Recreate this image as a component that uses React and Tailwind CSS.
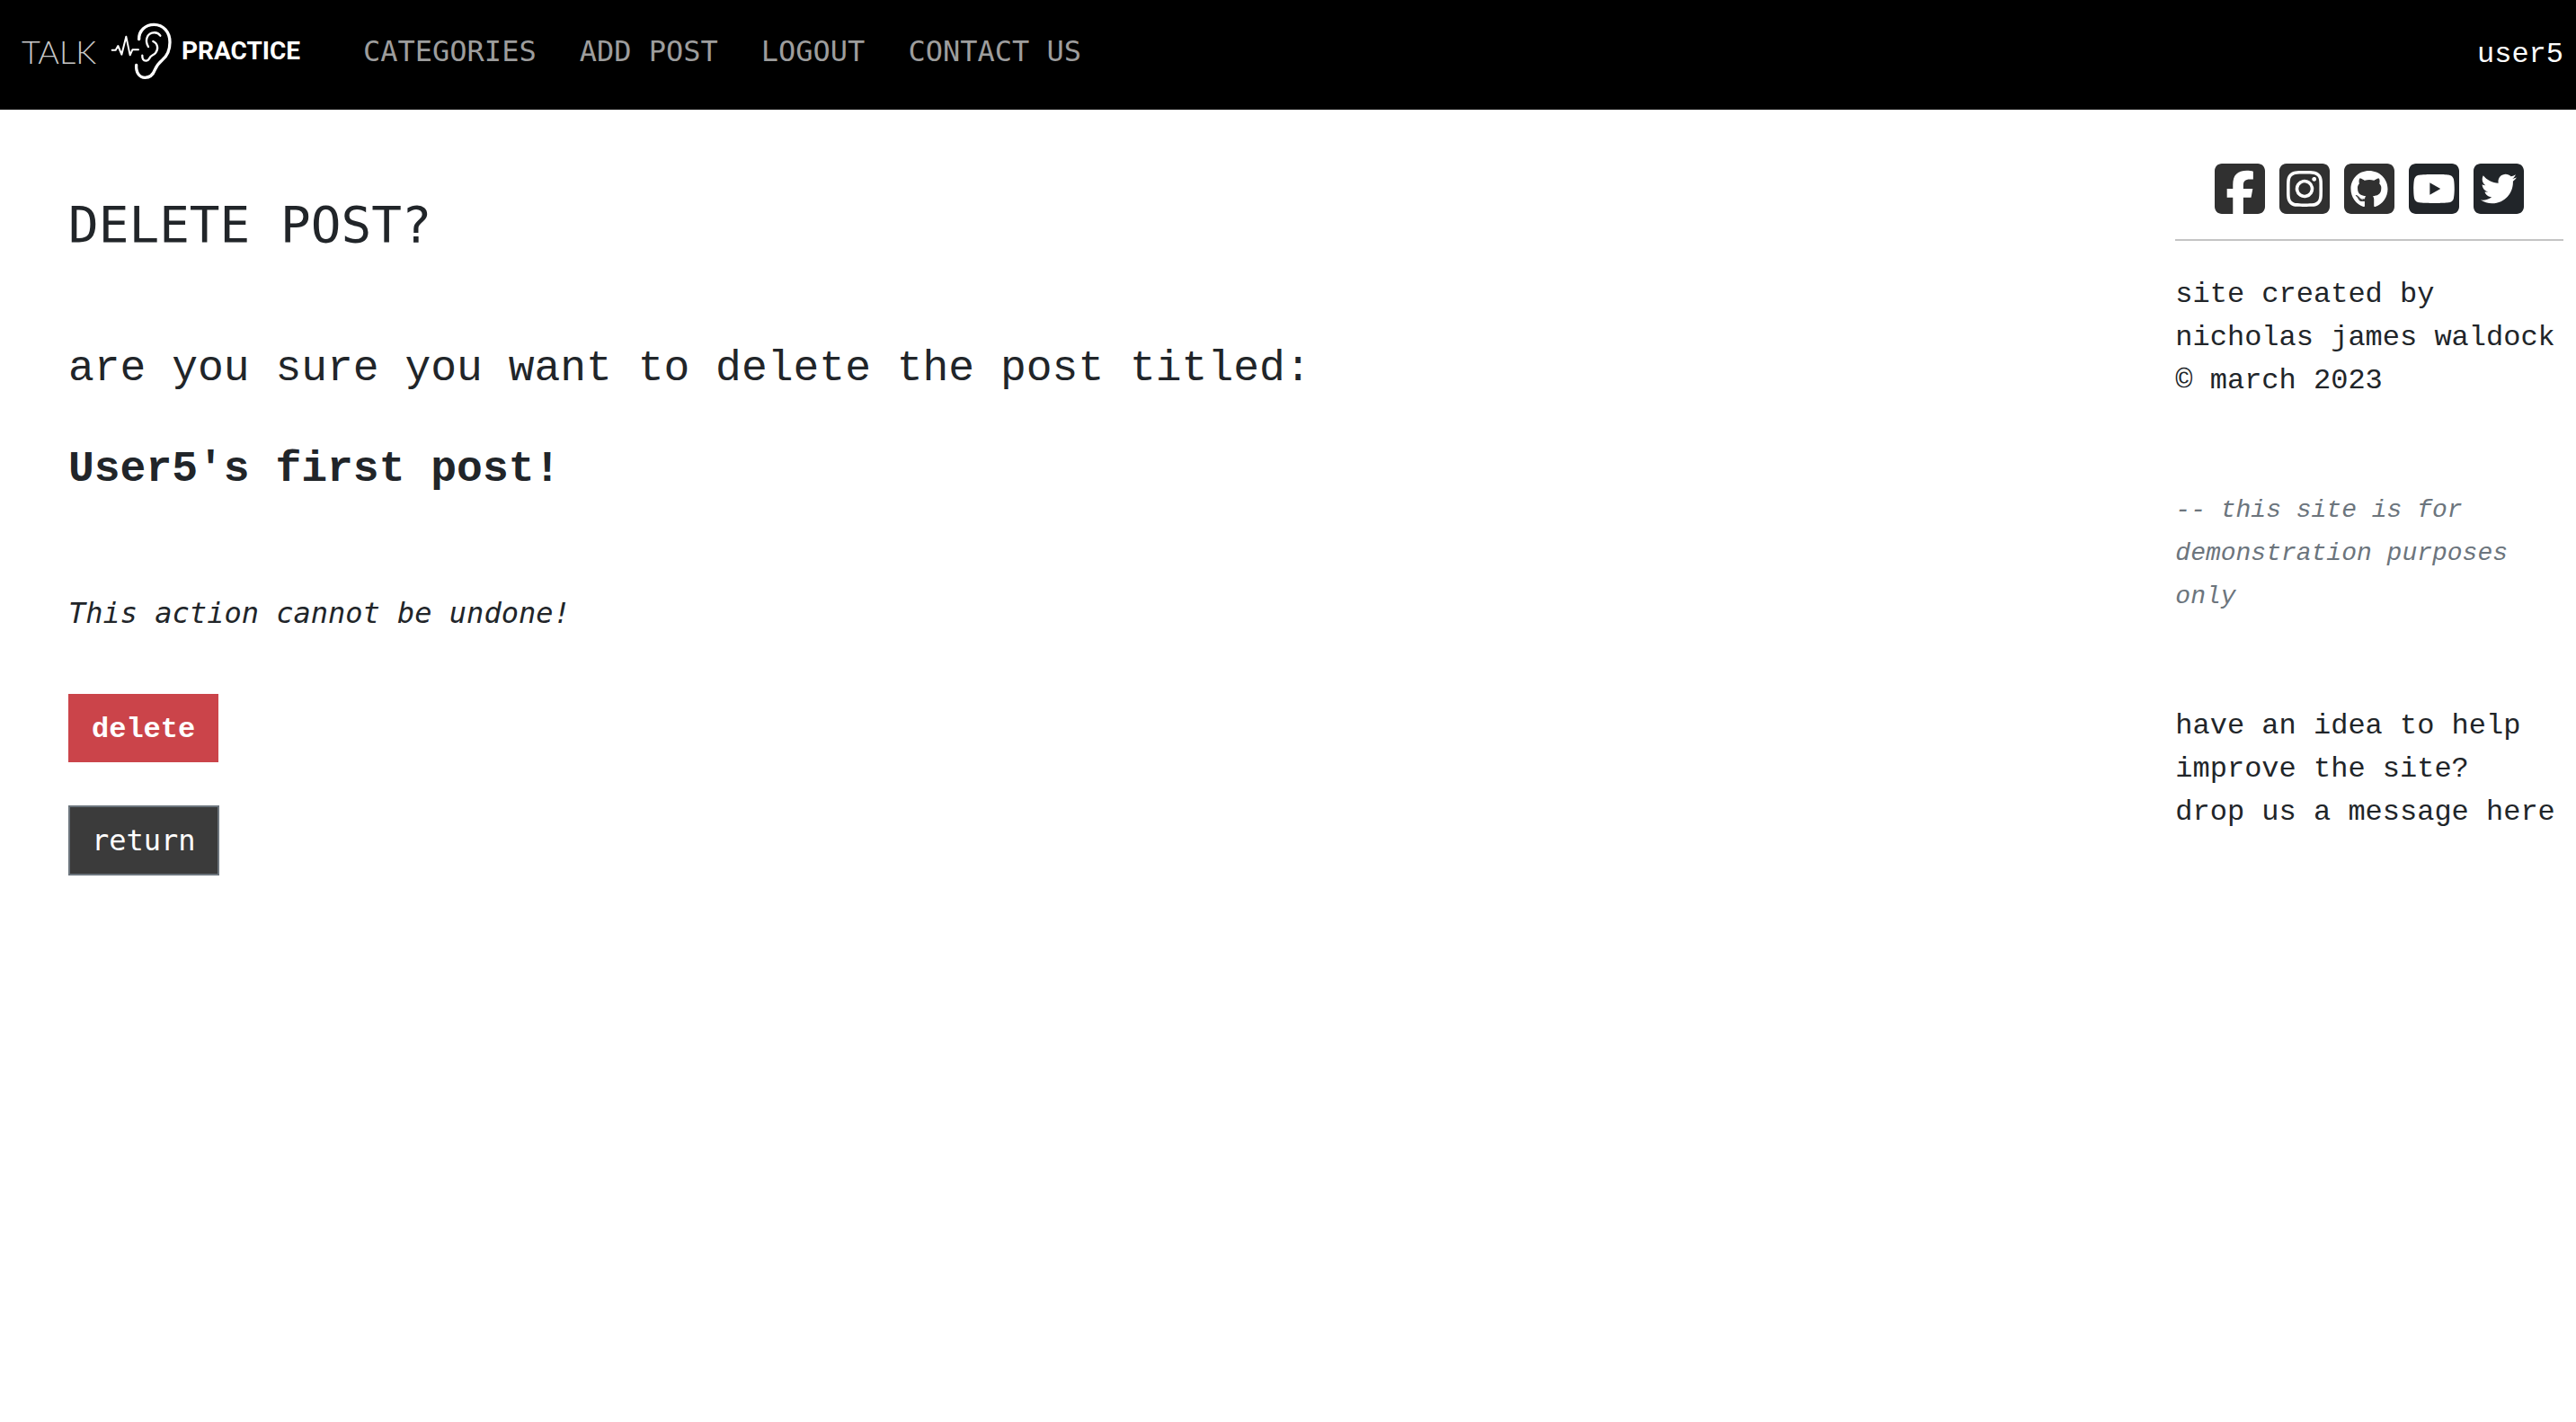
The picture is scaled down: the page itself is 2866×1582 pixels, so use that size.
import React from "react";
import {
  FaSquareFacebook,
  FaSquareInstagram,
  FaSquareGithub,
  FaSquareYoutube,
  FaSquareTwitter,
} from "react-icons/fa6";

const links = ["CATEGORIES", "ADD POST", "LOGOUT", "CONTACT US"];

const socials = [
  { name: "Facebook", Icon: FaSquareFacebook, color: "text-[#303030]" },
  { name: "Instagram", Icon: FaSquareInstagram, color: "text-[#303030]" },
  { name: "GitHub", Icon: FaSquareGithub, color: "text-[#303030]" },
  { name: "YouTube", Icon: FaSquareYoutube, color: "text-[#212529]" },
  { name: "Twitter", Icon: FaSquareTwitter, color: "text-[#212529]" },
];

function Logo() {
  return (
    <a href="#" className="flex w-[320px] items-center pl-1 text-white">
      <span className="w-[98px] font-['Lato'] text-[36px] leading-[48px] font-light text-[#c8c8c8]">
        TALK
      </span>
      <svg
        viewBox="366 60 216 228"
        className="h-[76px] w-[72px] shrink-0"
        fill="none"
        stroke="currentColor"
        strokeLinecap="round"
        strokeLinejoin="round"
        aria-hidden="true"
      >
        <path strokeWidth="6" d="M374 170H386L394 156L406 185L421 125L434 187L442 169H462" />
        <path
          strokeWidth="10"
          d="M464 134C463 106 485 85 514 85C545 85 567 110 567 144C567 172 558 190 541 204C529 214 523 222 517 236C511 252 501 262 484 262C465 262 453 244 455 220"
        />
        <path strokeWidth="7" d="M495 159C483 139 490 118 507 113C519 110 529 113 535 122" />
        <path
          strokeWidth="7"
          d="M511 141C528 149 529 168 519 180C513 187 505 187 501 194C497 202 493 206 487 206C478 206 474 198 475 188"
        />
      </svg>
      <span className="pl-2 font-['Roboto'] text-[28px] leading-[48px] font-bold">PRACTICE</span>
    </a>
  );
}

function Header() {
  return (
    <header className="flex h-[122px] items-center justify-between bg-black pr-[14px] pl-5">
      <div className="flex items-center gap-16 pb-2">
        <Logo />
        <nav className="flex gap-12 font-['DejaVu_Sans_Mono',monospace] text-[#9d9d9d]">
          {links.map((label) => (
            <a key={label} href="#">
              {label}
            </a>
          ))}
        </nav>
      </div>
      <a href="#" className="text-white">
        user5
      </a>
    </header>
  );
}

function Sidebar() {
  return (
    <aside className="w-1/6 pt-14 pr-[14px] pl-8">
      <div className="flex justify-center gap-4 border-b-2 border-[#c4c4c4] pb-6">
        {socials.map(({ name, Icon, color }) => (
          <a key={name} href="#" aria-label={name} className={color}>
            <Icon className="h-16 w-14" />
          </a>
        ))}
      </div>
      <p className="pt-9">
        site created by
        <br />
        nicholas james waldock
        <br />© march 2023
      </p>
      <p className="pt-24 text-[28px] leading-[48px] text-[#6c757d] italic">
        -- this site is for demonstration purposes only
      </p>
      <p className="pt-24">
        have an idea to help
        <br />
        improve the site?
        <br />
        <a href="#">drop us a message here</a>
      </p>
    </aside>
  );
}

export default function App() {
  return (
    <div className="min-h-screen bg-white font-['Liberation_Mono',monospace] text-[32px] leading-[48px] text-[#212529]">
      <Header />
      <div className="flex">
        <main className="flex flex-1 flex-col items-start pt-24 pl-[76px]">
          <h1 className="font-['DejaVu_Sans_Mono',monospace] text-[56px] leading-[64px]">
            DELETE POST?
          </h1>
          <p className="pt-[92px] text-[48px] leading-[72px]">
            are you sure you want to delete the post titled:
          </p>
          <p className="pt-10 text-[48px] leading-[72px] font-bold">User5's first post!</p>
          <p className="pt-[100px] font-['DejaVu_Sans_Mono',monospace] italic">
            This action cannot be undone!
          </p>
          <form className="flex flex-col items-start gap-12 pt-[66px]">
            <button
              type="button"
              className="bg-[#cb444a] px-[26px] pt-4 pb-3 font-bold text-white"
            >
              delete
            </button>
            <button
              type="button"
              className="border-2 border-[#6c757d] bg-[#3b3b3b] px-6 py-[13px] font-['DejaVu_Sans_Mono',monospace] text-white"
            >
              return
            </button>
          </form>
        </main>
        <Sidebar />
      </div>
    </div>
  );
}
